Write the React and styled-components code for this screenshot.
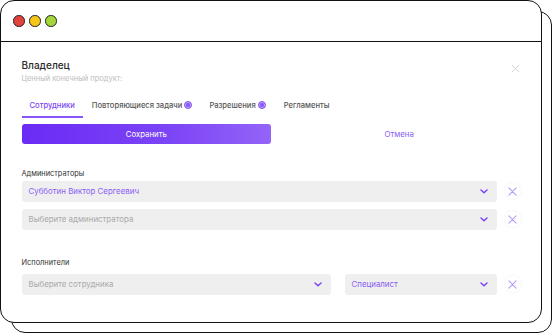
import React from "react";
import styled, { createGlobalStyle } from "styled-components";

const Global = createGlobalStyle`
  html, body { margin: 0; padding: 0; background: #fff; }
  body { font-family: Inter, "Noto Sans", sans-serif; }
  * { box-sizing: border-box; }
`;

const Stage = styled.div`
  position: relative;
  width: 553px;
  height: 334px;
  padding: 0 11px 11px 0;
`;

const BackWindow = styled.div`
  position: absolute;
  left: 11px;
  top: 11px;
  right: 1px;
  bottom: 1px;
  border: 1.5px solid #111;
  border-radius: 14px;
  background: #fff;
`;

const Window = styled.div`
  position: relative;
  height: 100%;
  border: 1.5px solid #111;
  border-radius: 14px;
  background: #fff;
  display: flex;
  flex-direction: column;
  overflow: hidden;
`;

const TitleBar = styled.div`
  height: 41px;
  flex: none;
  border-bottom: 1.5px solid #111;
  display: flex;
  align-items: center;
  gap: 4.5px;
  padding: 0 0 0 12px;
`;

const Light = styled.span`
  width: 11.5px;
  height: 11.5px;
  border-radius: 50%;
  border: 1px solid #222;
  background: ${(p) => p.$c};
`;

const Body = styled.div`
  flex: 1;
  padding: 17px 0 0 20.5px;
  display: flex;
  flex-direction: column;
`;

const HeadRow = styled.div`
  display: flex;
  justify-content: space-between;
  align-items: flex-start;
  width: 498px;
`;

const Title = styled.div`
  font-size: 10px;
  line-height: 12px;
  color: #2a2a2a;
  font-weight: 500;
`;

const Subtitle = styled.div`
  font-size: 7.5px;
  line-height: 10px;
  margin-top: 3px;
  color: #bdbdbd;
`;

const CloseBtn = styled.svg`
  margin-top: 5px;
  width: 9px;
  height: 9px;
`;

const Tabs = styled.div`
  display: flex;
  margin-top: 12px;
`;

const Tab = styled.div`
  display: flex;
  align-items: center;
  gap: 2px;
  height: 22px;
  padding: 0 ${(p) => p.$px || 8}px 2px;
  font-size: 7.6px;
  font-weight: 500;
  color: ${(p) => (p.$active ? "#7a44f6" : "#555")};
  border-bottom: 2px solid ${(p) => (p.$active ? "#8a55f7" : "transparent")};
`;

const Dot = styled.span`
  flex: none;
  width: 8px;
  height: 8px;
  border-radius: 50%;
  background: #8b5cf6;
  border: 1.5px solid #8b5cf6;
  box-shadow: inset 0 0 0 0.8px #c9b3fb;
`;

const Buttons = styled.div`
  display: flex;
  margin-top: 6px;
  width: 506px;
`;

const SaveButton = styled.button`
  width: 249.5px;
  height: 19.5px;
  border: none;
  border-radius: 3px;
  background: linear-gradient(90deg, #6a2bf4 0%, #7c45f6 60%, #9464f8 100%);
  color: #fff;
  font-family: inherit;
  font-size: 7.8px;
  padding: 0;
`;

const CancelButton = styled.button`
  flex: 1;
  height: 19.5px;
  border: none;
  background: transparent;
  color: #8a5cf6;
  font-family: inherit;
  font-size: 7.8px;
  padding: 0;
`;

const Section = styled.div`
  display: flex;
  flex-direction: column;
  gap: 7px;
  margin-top: ${(p) => p.$mt}px;
`;

const Label = styled.div`
  font-size: 7.4px;
  line-height: 10px;
  color: #333;
  margin-bottom: ${(p) => p.$mb}px;
`;

const Row = styled.div`
  display: flex;
  align-items: center;
  gap: 14px;
`;

const Select = styled.div`
  width: ${(p) => p.$w}px;
  height: 21px;
  border-radius: 3px;
  background: #efefef;
  display: flex;
  align-items: center;
  justify-content: space-between;
  padding: 0 9px 0 7px;
  font-size: 7.9px;
  color: ${(p) => (p.$value ? "#8a5cf6" : "#aaa")};
`;

const RemoveBtn = styled.div`
  width: 16px;
  height: 16px;
  margin-left: -6px;
  border-radius: 50%;
  background: #fff;
  box-shadow: 0 0 3px rgba(120, 90, 200, 0.12);
  display: flex;
  align-items: center;
  justify-content: center;
`;

const Chevron = () => (
  <svg width="8" height="5" viewBox="0 0 8 5" fill="none">
    <path d="M1 1 L4 3.8 L7 1" stroke="#7a44f6" strokeWidth="1.5" strokeLinecap="round" strokeLinejoin="round" />
  </svg>
);

const Cross = ({ color = "#b59bfa", size = 9, w = 1.2 }) => (
  <svg width={size} height={size} viewBox="0 0 10 10" fill="none">
    <path d="M1 1 L9 9 M9 1 L1 9" stroke={color} strokeWidth={w} strokeLinecap="round" />
  </svg>
);

const Field = ({ w, value, placeholder }) => (
  <Select $w={w} $value={!!value}>
    <span>{value || placeholder}</span>
    <Chevron />
  </Select>
);

export default function App() {
  return (
    <>
      <Global />
      <Stage>
        <BackWindow />
        <Window>
          <TitleBar>
            <Light $c="#e0443a" />
            <Light $c="#f5c518" />
            <Light $c="#a4d63a" />
          </TitleBar>
          <Body>
            <HeadRow>
              <div>
                <Title>Владелец</Title>
                <Subtitle>Ценный конечный продукт:</Subtitle>
              </div>
              <CloseBtn viewBox="0 0 10 10" fill="none">
                <path d="M1 1 L9 9 M9 1 L1 9" stroke="#cfcfcf" strokeWidth="1" />
              </CloseBtn>
            </HeadRow>
            <Tabs>
              <Tab $active>Сотрудники</Tab>
              <Tab $px={9}>
                Повторяющиеся задачи <Dot />
              </Tab>
              <Tab $px={8}>
                Разрешения <Dot />
              </Tab>
              <Tab $px={10}>Регламенты</Tab>
            </Tabs>
            <Buttons>
              <SaveButton>Сохранить</SaveButton>
              <CancelButton>Отмена</CancelButton>
            </Buttons>
            <Section $mt={25}>
              <Label $mb={-5}>Администраторы</Label>
              <Row>
                <Field w={475} value="Субботин Виктор Сергеевич" />
                <RemoveBtn>
                  <Cross />
                </RemoveBtn>
              </Row>
              <Row>
                <Field w={475} placeholder="Выберите администратора" />
                <RemoveBtn>
                  <Cross />
                </RemoveBtn>
              </Row>
            </Section>
            <Section $mt={28}>
              <Label $mb={-1}>Исполнители</Label>
              <Row>
                <Field w={309} placeholder="Выберите сотрудника" />
                <Field w={152} value="Специалист" />
                <RemoveBtn>
                  <Cross />
                </RemoveBtn>
              </Row>
            </Section>
          </Body>
        </Window>
      </Stage>
    </>
  );
}
